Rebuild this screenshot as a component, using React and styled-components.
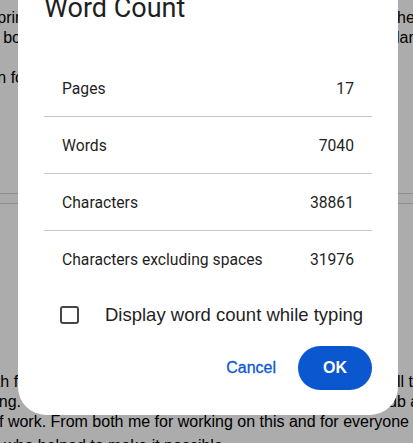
import React, { useState } from "react";
import styled, { createGlobalStyle } from "styled-components";

const GlobalStyle = createGlobalStyle`
  html, body {
    margin: 0;
    padding: 0;
    overflow: hidden;
    background: #ffffff;
  }
`;

const stats = [
  { id: 1, label: "Pages", value: "17" },
  { id: 2, label: "Words", value: "7040" },
  { id: 3, label: "Characters", value: "38861" },
  { id: 4, label: "Characters excluding spaces", value: "31976" },
];

const topLines = [
  { left: "sprin", lw: 24, right: "here", rw: 16 },
  { left: "a bo", lw: 21, right: "land", rw: 17 },
  { left: "", lw: 0, right: "", rw: 0 },
  { left: "ation fo", lw: 24, right: "", rw: 0 },
];

const bottomLines = [
  { left: "with fo", lw: 27, right: "ll this", rw: 16 },
  { left: "ing. T", lw: 35, right: "ub and", rw: 25 },
];

const WordCount = () => {
  const [showWhileTyping, setShowWhileTyping] = useState(false);

  return (
    <>
      <GlobalStyle />
      <Doc>
        <Page $first>
          {topLines.map((line, i) => (
            <Line key={i}>
              <Left $w={line.lw}>{line.left}</Left>
              <Right $w={line.rw}>{line.right}</Right>
            </Line>
          ))}
        </Page>
        <PageGap />
        <Page>
          {bottomLines.map((line, i) => (
            <Line key={i}>
              <Left $w={line.lw}>{line.left}</Left>
              <Right $w={line.rw}>{line.right}</Right>
            </Line>
          ))}
          <FullLine $indent={-1}>
            f work. From both me for working on this and for everyone
          </FullLine>
          <FullLine $indent={4} $gap={4}>
            who helped to make it possible.
          </FullLine>
        </Page>
      </Doc>

      <Overlay />

      <Dialog>
        <Title>Word Count</Title>
        <StatList>
          {stats.map((stat) => (
            <StatRow key={stat.id}>
              <span>{stat.label}</span>
              <span>{stat.value}</span>
            </StatRow>
          ))}
        </StatList>
        <CheckRow onClick={() => setShowWhileTyping((v) => !v)}>
          <Box $checked={showWhileTyping} />
          <CheckLabel>Display word count while typing</CheckLabel>
        </CheckRow>
        <Actions>
          <TextButton>Cancel</TextButton>
          <FilledButton>OK</FilledButton>
        </Actions>
      </Dialog>
    </>
  );
};

export default WordCount;

const Doc = styled.div`
  display: flex;
  flex-direction: column;
  font-family: "Liberation Sans", Arial, sans-serif;
  font-size: 16px;
  color: #000;
`;

const Page = styled.div`
  box-sizing: border-box;
  background: #fff;
  padding-top: ${(p) => (p.$first ? "8px" : "168px")};
  height: ${(p) => (p.$first ? "194px" : "249px")};
  border-bottom: ${(p) => (p.$first ? "1px solid #d2d2d2" : "none")};
  border-top: ${(p) => (p.$first ? "none" : "1px solid #d2d2d2")};
`;

const PageGap = styled.div`
  height: 9px;
  background: #fdfdfd;
`;

const Line = styled.div`
  display: flex;
  justify-content: space-between;
  height: 20px;
  line-height: 20px;
  overflow: hidden;
  white-space: nowrap;
`;

const Left = styled.span`
  display: flex;
  justify-content: flex-end;
  width: ${(p) => p.$w}px;
  flex: none;
`;

const Right = styled.span`
  display: flex;
  justify-content: flex-start;
  width: ${(p) => p.$w}px;
  flex: none;
`;

const FullLine = styled.div`
  height: 20px;
  line-height: 20px;
  margin-top: ${(p) => p.$gap || 0}px;
  white-space: nowrap;
  overflow: hidden;
  text-indent: ${(p) => p.$indent}px;
`;

const Overlay = styled.div`
  position: fixed;
  inset: 0;
  background: rgba(0, 0, 0, 0.325);
`;

const Dialog = styled.div`
  position: fixed;
  top: -32px;
  left: 18px;
  width: 380px;
  box-sizing: border-box;
  padding: 24px 26px 25px;
  background: #fff;
  border-radius: 28px;
  font-family: Roboto, "Noto Sans", sans-serif;
  color: #1f1f1f;
`;

const Title = styled.h1`
  margin: 0 0 36px;
  font-size: 27px;
  line-height: 32px;
  font-weight: 400;
  color: #1f1f1f;
`;

const StatList = styled.div`
  display: flex;
  flex-direction: column;
`;

const StatRow = styled.div`
  display: flex;
  justify-content: space-between;
  align-items: center;
  height: 56px;
  padding: 0 18px;
  font-size: 15.7px;
  color: #1f1f1f;
  border-bottom: 1px solid #c7c7c7;

  &:last-child {
    border-bottom: none;
  }
`;

const CheckRow = styled.label`
  display: flex;
  align-items: center;
  gap: 26px;
  height: 48px;
  margin-top: 4px;
  padding-left: 16px;
  cursor: pointer;
`;

const Box = styled.span`
  box-sizing: border-box;
  width: 19px;
  height: 18px;
  border: 2px solid #444746;
  border-radius: 3px;
  background: ${(p) => (p.$checked ? "#0b57d0" : "transparent")};
`;

const CheckLabel = styled.span`
  font-family: "Liberation Sans", Arial, sans-serif;
  font-size: 18.5px;
  color: #1f1f1f;
`;

const Actions = styled.div`
  display: flex;
  justify-content: flex-end;
  align-items: center;
  gap: 10px;
  margin-top: 7px;
`;

const TextButton = styled.button`
  height: 44px;
  padding: 0 12px;
  border: none;
  background: transparent;
  font-family: "Liberation Sans", Arial, sans-serif;
  font-size: 16px;
  color: #0b57d0;
  -webkit-text-stroke: 0.3px #0b57d0;
  cursor: pointer;
`;

const FilledButton = styled.button`
  height: 44px;
  width: 74px;
  border: none;
  border-radius: 22px;
  background: #0b57d0;
  font-family: "Liberation Sans", Arial, sans-serif;
  font-size: 16px;
  font-weight: 700;
  color: #fff;
  cursor: pointer;
`;
